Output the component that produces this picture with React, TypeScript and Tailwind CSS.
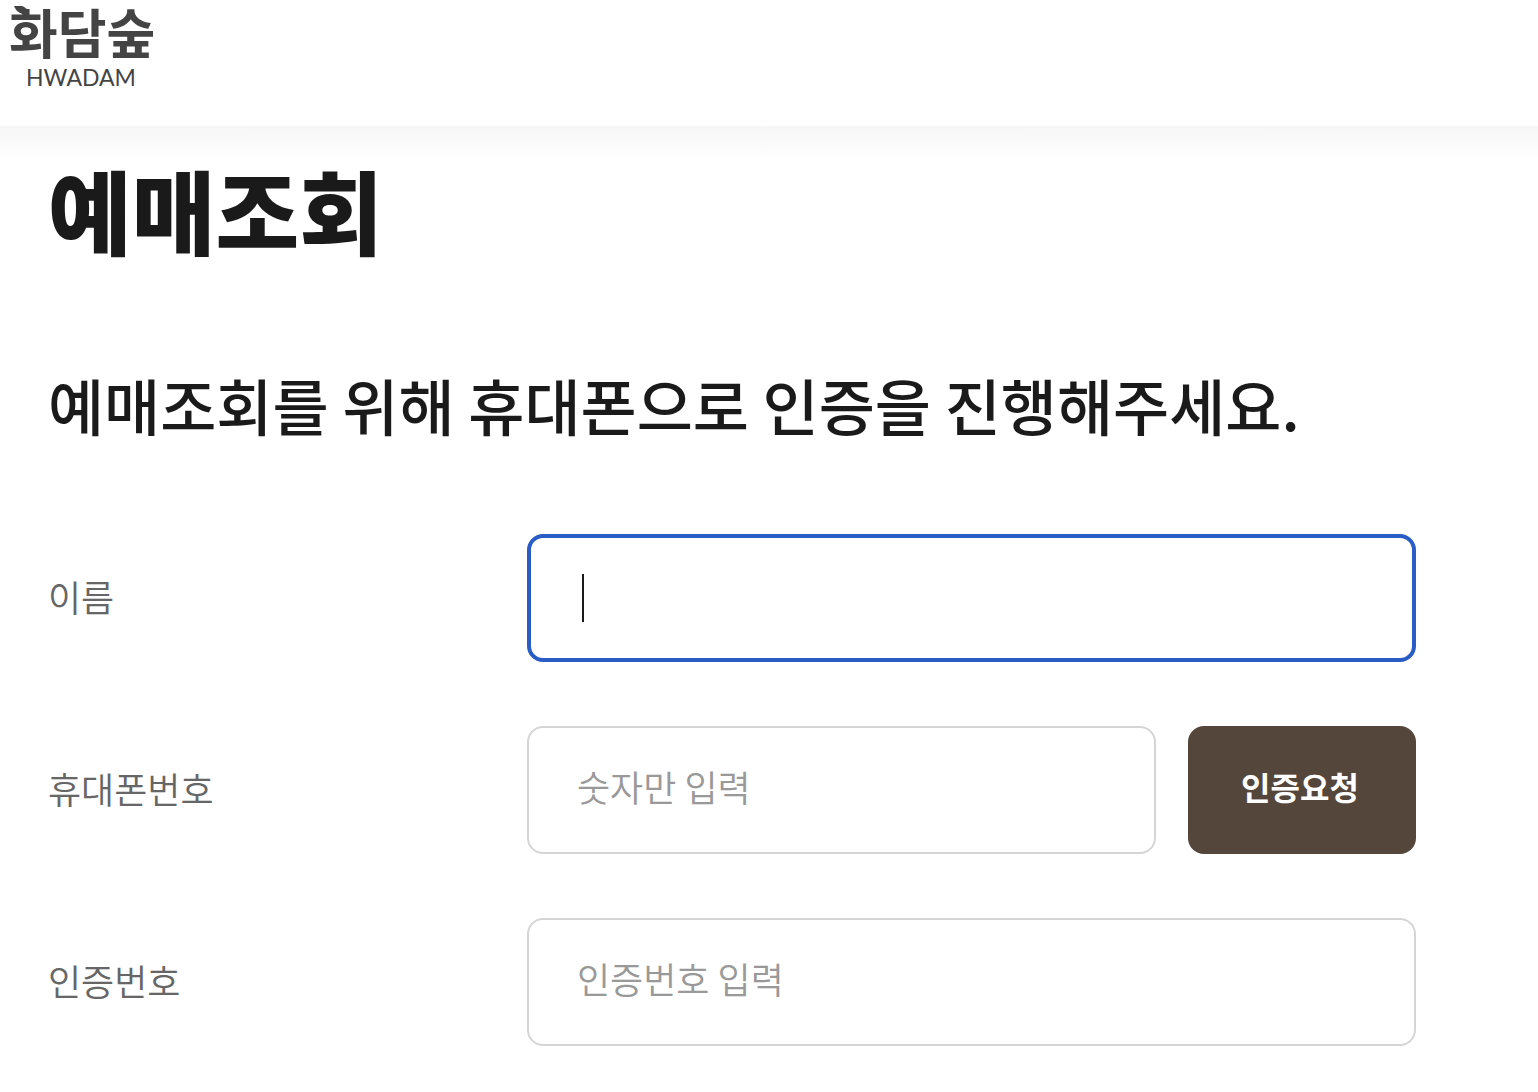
import type { ReactNode } from 'react'

const inputClass =
  'h-32 w-full min-w-0 rounded-2xl border-2 border-[#d5d5d5] bg-white px-12 pb-2 text-4xl font-[350] text-[#1a1a1a] placeholder:text-[#999999] outline-none'

function Logo() {
  return (
    <a href="#" aria-label="화담숲" className="block">
      <svg width="176" height="104" viewBox="0 0 176 104" fill="#444444">
        <text x="9" y="54" fontSize="53" fontWeight="700" className="font-['Noto_Sans_CJK_KR',sans-serif]">
          화담숲
        </text>
        <path d="M14 6 H22 C27 8 29 11 29 15 C22 15 16 12 14 6 Z" />
        <text x="26" y="86" fontSize="23" className="font-['Lato',sans-serif]">
          HWADAM
        </text>
      </svg>
    </a>
  )
}

function Field({ id, label, children }: { id: string; label: string; children: ReactNode }) {
  return (
    <div className="grid grid-cols-[479px_1fr] items-center">
      <label htmlFor={id} className="pb-1 text-4xl font-[350] text-[#666666]">
        {label}
      </label>
      <div className="flex gap-8">{children}</div>
    </div>
  )
}

export default function App() {
  return (
    <div className="min-h-screen bg-white font-['Noto_Sans_CJK_KR',sans-serif] text-[#1a1a1a]">
      <header>
        <div className="h-[126px]">
          <Logo />
        </div>
        <div className="h-8 bg-linear-to-b from-[#f6f6f6] to-white" />
      </header>

      <main className="pr-[122px] pb-12 pl-12">
        <h1 className="text-[91px] leading-[100px] font-black">예매조회</h1>
        <h2 className="mt-[100px] text-[61px] leading-[94px] font-medium">
          예매조회를 위해 휴대폰으로 인증을 진행해주세요.
        </h2>

        <form className="mt-[82px] flex flex-col gap-16" onSubmit={e => e.preventDefault()}>
          <Field id="name" label="이름">
            <div className="relative w-full">
              <input
                id="name"
                type="text"
                autoFocus
                className={`${inputClass} peer caret-transparent focus:border-4 focus:border-[#295dc5]`}
              />
              {/* Text cursor */}
              <span className="pointer-events-none absolute top-10 left-[55px] hidden h-12 w-0.5 bg-[#1a1a1a] peer-focus:block" />
            </div>
          </Field>

          <Field id="phone" label="휴대폰번호">
            <input id="phone" type="tel" placeholder="숫자만 입력" className={inputClass} />
            <button
              type="submit"
              className="h-32 w-[228px] shrink-0 rounded-2xl bg-[#54463b] pr-1 pb-2 text-[32px] font-bold text-white"
            >
              인증요청
            </button>
          </Field>

          <Field id="code" label="인증번호">
            <input id="code" type="text" placeholder="인증번호 입력" className={inputClass} />
          </Field>
        </form>
      </main>
    </div>
  )
}
